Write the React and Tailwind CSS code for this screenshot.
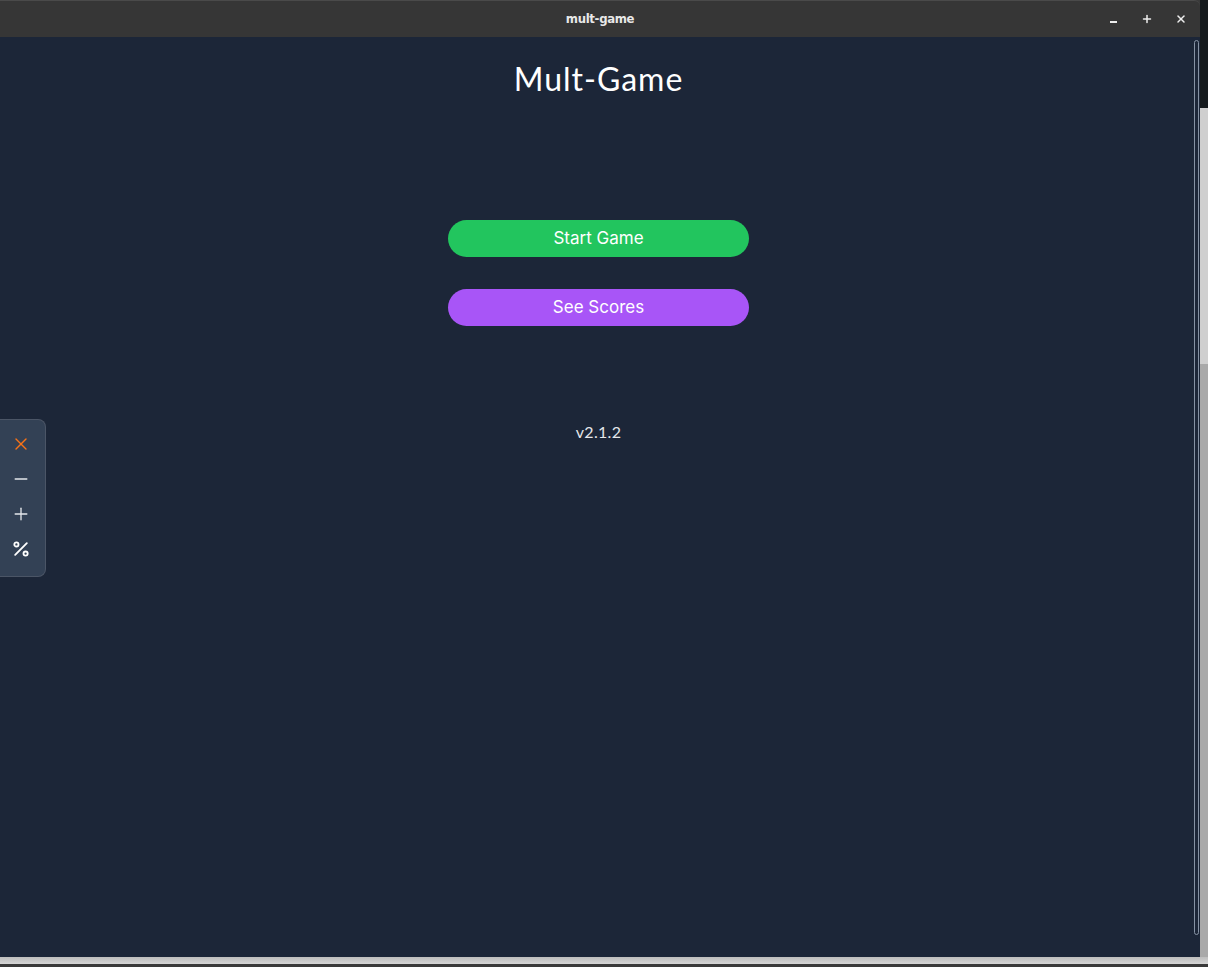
import { X, Plus, Minus, Percent } from 'lucide-react';

export default function App() {
  return (
    <div className="w-[1208px] h-[967px] overflow-hidden bg-[#3a3a3a] flex flex-col">
      <div className="flex h-[957px]">
        {/* Window */}
        <div className="w-[1200px] flex flex-col">
          {/* Title bar */}
          <div className="h-[37px] bg-[#363636] rounded-tr-md border-t border-[#4a4a4a] relative flex items-center justify-center shrink-0">
            <span className="text-[13px] font-bold text-[#e8e8e8] tracking-tight" style={{ fontFamily: '"DejaVu Sans Condensed", "DejaVu Sans", sans-serif' }}>
              mult-game
            </span>
            <div className="absolute right-[12px] top-0 h-full flex items-center gap-[20px] text-[#eeeeee]">
              <span className="w-[14px] flex justify-center pt-[6px]">
                <span className="block w-[7px] h-[2px] bg-[#eeeeee]" />
              </span>
              <span className="w-[14px] flex justify-center">
                <Plus size={12} strokeWidth={3} />
              </span>
              <span className="w-[14px] flex justify-center">
                <X size={12} strokeWidth={3} />
              </span>
            </div>
          </div>

          {/* Content */}
          <div className="relative flex-1 bg-[#1c2638] flex flex-col items-center pr-[3px]" style={{ fontFamily: 'Inter, "Noto Sans", sans-serif' }}>
            <h1 className="mt-[23px] text-[32px] leading-[38px] text-white tracking-[1px]" style={{ fontFamily: 'Lato, "Open Sans", sans-serif' }}>
              Mult-Game
            </h1>

            <div className="mt-[122px] flex flex-col gap-[32px]">
              <button className="w-[301px] h-[37px] rounded-full bg-[#22c55e] text-white text-[17px]">
                Start Game
              </button>
              <button className="w-[301px] h-[37px] rounded-full bg-[#a855f7] text-white text-[17px]">
                See Scores
              </button>
            </div>

            <p className="mt-[94px] text-[16px] text-[#e5e7eb] tracking-[0.3px]" style={{ fontFamily: 'Lato, "Open Sans", sans-serif' }}>
              v2.1.2
            </p>

            {/* Floating toolbar */}
            <div className="absolute left-0 top-[382px] w-[46px] h-[158px] bg-[#334155] border border-[#4b5566] border-l-0 rounded-r-lg flex flex-col items-center pt-[14px] gap-[15px] pr-[4px]">
              <X size={20} strokeWidth={1.6} className="text-[#f97316]" />
              <Minus size={20} strokeWidth={1.6} className="text-[#e5e7eb]" />
              <Plus size={20} strokeWidth={1.6} className="text-[#e5e7eb]" />
              <Percent size={20} strokeWidth={2.2} className="text-white" />
            </div>

            {/* Scrollbar */}
            <div className="absolute right-[1px] top-[3px] w-[5px] h-[895px] rounded-full border border-[#8692a4]" />
          </div>
        </div>

        {/* Right edge outside the window */}
        <div className="w-[8px] flex flex-col">
          <div className="h-[108px] bg-[#151a1d]" />
          <div className="h-[256px] bg-[#cfcfcf]" />
          <div className="flex-1 bg-[#a9a9a9]" />
        </div>
      </div>
      <div className="h-[7px] bg-gradient-to-b from-[#bdbdbd] to-[#d6d6d6]" />
      <div className="h-[3px] bg-[#3a3a3a]" />
    </div>
  );
}
